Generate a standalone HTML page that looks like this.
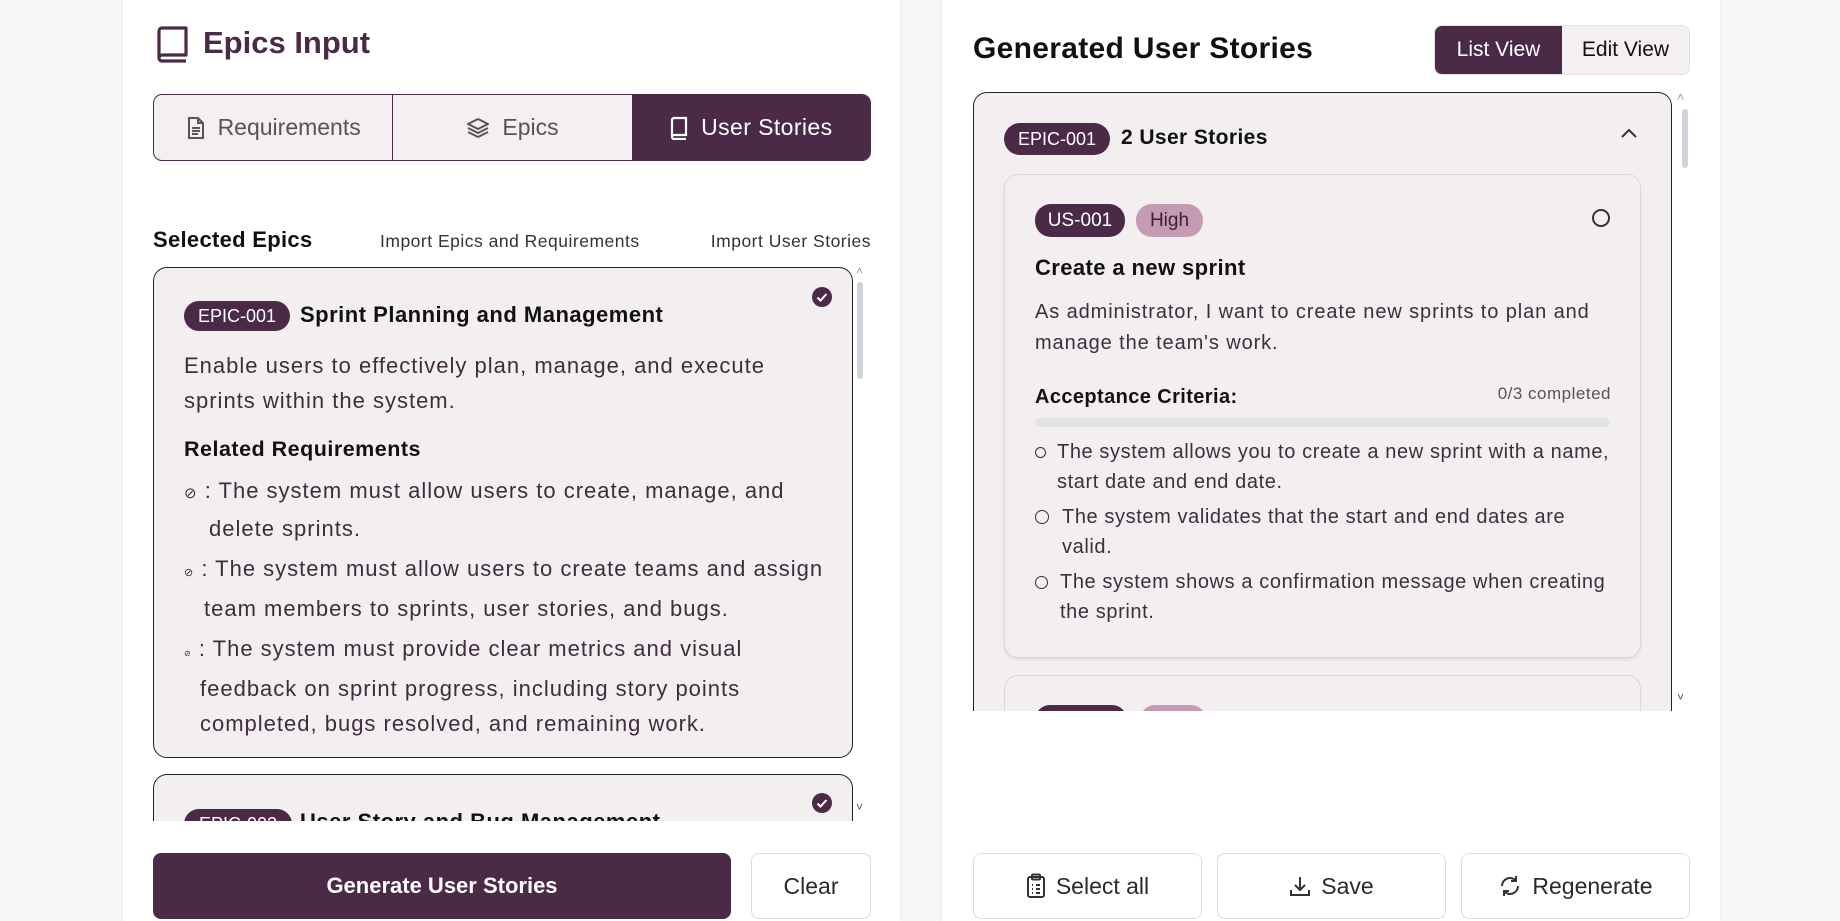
<!DOCTYPE html>
<html><head><meta charset="utf-8"><style>
*{box-sizing:border-box;margin:0;padding:0}
html{width:1840px;height:921px;overflow:hidden}
body{width:1840px;height:921px;overflow:hidden;background:#f7f7f8;font-family:"Liberation Sans",sans-serif;position:relative;color:#3f2d3d}
.abs{position:absolute}
.panel{position:absolute;top:-20px;height:941px;background:#fff;border-radius:14px 14px 0 0;box-shadow:0 0 3px rgba(0,0,0,.08)}
.plum{background:#4b2a48;color:#fff}
.badge{position:absolute;border-radius:16px;background:#4b2a48;color:#fff;font-size:18px;display:flex;align-items:center;justify-content:center}
.btn{position:absolute;border:1px solid #ddd;border-radius:8px;background:#fff;display:flex;align-items:center;justify-content:center;font-size:23px;color:#2a2a2a;gap:10px}
.t{position:absolute;white-space:nowrap}
.sp{letter-spacing:1px}
</style></head><body>
<div class="panel" style="left:123px;width:777px"></div>
<div class="panel" style="left:942px;width:778px"></div>

<!-- left -->
<svg class="abs" style="left:155px;top:25px" width="36" height="38" viewBox="0 0 36 38" fill="none" stroke="#4b2a48" stroke-width="3.2" stroke-linejoin="round"><path d="M4 33V6a3 3 0 0 1 3-3h24v27H7a3 3 0 0 0 0 6h24"/></svg>
<div class="t" style="left:203px;top:25px;font-size:31px;font-weight:bold;color:#4b2a48">Epics Input</div>

<div class="abs" style="left:153px;top:94px;width:718px;height:67px;border:1px solid #4b2a48;border-radius:9px;background:#f3eff3;overflow:hidden;display:flex">
 <div style="flex:1;display:flex;align-items:center;justify-content:center;gap:12px;font-size:23px;color:#555;border-right:1px solid #4b2a48">
  <svg width="20" height="24" viewBox="0 0 20 24" fill="none" stroke="#555" stroke-width="2"><path d="M3 2h9l5 5v15H3z"/><path d="M12 2v5h5M6 12h8M6 15h8M6 18h6"/></svg>Requirements</div>
 <div style="flex:1;display:flex;align-items:center;justify-content:center;gap:12px;font-size:23px;color:#555">
  <svg width="24" height="24" viewBox="0 0 24 24" fill="none" stroke="#555" stroke-width="2" stroke-linejoin="round"><path d="M12 3 2 8l10 5 10-5z"/><path d="M2 12l10 5 10-5M2 16l10 5 10-5"/></svg>Epics</div>
 <div class="plum" style="flex:1;display:flex;align-items:center;justify-content:center;gap:12px;font-size:23px;letter-spacing:.4px">
  <svg width="20" height="24" viewBox="0 0 20 24" fill="none" stroke="#fff" stroke-width="2.2"><path d="M3 21V4a2 2 0 0 1 2-2h12v17H5a2 2 0 0 0 0 4h12"/></svg>User Stories</div>
</div>

<div class="t" style="left:153px;top:227px;font-size:22px;font-weight:bold;color:#111;letter-spacing:.3px">Selected Epics</div>
<div class="t" style="left:380px;top:231px;font-size:17.5px;color:#333;letter-spacing:.5px">Import Epics and Requirements</div>
<div class="t" style="right:969px;top:231px;font-size:17.5px;color:#333;letter-spacing:.5px">Import User Stories</div>

<div class="abs" style="left:153px;top:267px;width:700px;height:491px;border:1.5px solid #222;border-radius:14px;background:#f3eff1"></div>
<svg class="abs" style="left:812px;top:287px" width="20" height="20" viewBox="0 0 20 20"><circle cx="10" cy="10" r="10" fill="#4b2a48"/><path d="M5.5 10.5l3 3 6-6.5" stroke="#fff" stroke-width="2" fill="none"/></svg>
<div class="badge" style="left:184px;top:301px;width:106px;height:30px">EPIC-001</div>
<div class="t" style="left:300px;top:302px;font-size:22px;font-weight:bold;color:#111;letter-spacing:.5px">Sprint Planning and Management</div>
<div class="abs sp" style="left:184px;top:348px;width:600px;font-size:22px;line-height:35px">Enable users to effectively plan, manage, and execute sprints within the system.</div>
<div class="t" style="left:184px;top:437px;font-size:21.5px;font-weight:bold;color:#111;letter-spacing:.5px">Related Requirements</div>
<div class="abs sp" style="left:184px;top:473px;width:650px;font-size:22px;line-height:35px">
 <div style="padding-left:25px;text-indent:-25px;width:630px"><span style="font-size:15px">⊘</span>&nbsp;: The system must allow users to create, manage, and delete sprints.</div>
 <div style="padding-left:20px;text-indent:-20px;margin-top:5px;width:650px"><span style="font-size:11px">⊘</span>&nbsp;: The system must allow users to create teams and assign team members to sprints, user stories, and bugs.</div>
 <div style="padding-left:16px;text-indent:-16px;margin-top:5px;width:580px"><span style="font-size:8px">⊘</span>&nbsp;: The system must provide clear metrics and visual feedback on sprint progress, including story points completed, bugs resolved, and remaining work.</div>
</div>
<div class="t" style="left:856px;top:264px;font-size:12px;color:#999">˄</div>
<div class="abs" style="left:857px;top:282px;width:6px;height:97px;background:#cfd4da;border-radius:3px"></div>
<div class="abs" style="left:153px;top:774px;width:700px;height:60px;border:1.5px solid #222;border-bottom:none;border-radius:14px 14px 0 0;background:#f3eff1;overflow:hidden">
 <div class="badge" style="left:30px;top:34px;width:108px;height:30px;font-size:18px">EPIC-002</div>
 <div class="t" style="left:146px;top:34px;font-size:22px;font-weight:bold;color:#111;letter-spacing:.5px">User Story and Bug Management</div>
</div>
<svg class="abs" style="left:812px;top:793px" width="20" height="20" viewBox="0 0 20 20"><circle cx="10" cy="10" r="10" fill="#4b2a48"/><path d="M5.5 10.5l3 3 6-6.5" stroke="#fff" stroke-width="2" fill="none"/></svg>
<div class="t" style="left:856px;top:800px;font-size:12px;color:#555">˅</div>
<div class="abs" style="left:140px;top:821px;width:715px;height:30px;background:#fff"></div>

<div class="btn" style="left:153px;top:853px;width:578px;height:66px;border:none;background:#4b2a48;color:#fff;font-weight:bold;font-size:22px">Generate User Stories</div>
<div class="btn" style="left:751px;top:853px;width:120px;height:66px">Clear</div>

<!-- right -->
<div class="t" style="left:973px;top:32px;font-size:30px;font-weight:bold;color:#111;letter-spacing:.3px">Generated User Stories</div>
<div class="abs" style="left:1434px;top:25px;width:256px;height:50px;border:1px solid #e5dfe5;border-radius:8px;background:#f3eff3;overflow:hidden;display:flex;font-size:21px">
 <div class="plum" style="width:127px;display:flex;align-items:center;justify-content:center">List View</div>
 <div style="flex:1;display:flex;align-items:center;justify-content:center;color:#111">Edit View</div>
</div>

<div class="abs" style="left:973px;top:92px;width:699px;height:640px;border:1.5px solid #222;border-radius:14px;background:#f3eff1"></div>
<div class="badge" style="left:1004px;top:123px;width:106px;height:32px;font-size:18px">EPIC-001</div>
<div class="t" style="left:1121px;top:126px;font-size:21px;font-weight:bold;color:#111;letter-spacing:.4px">2 User Stories</div>
<svg class="abs" style="left:1620px;top:127px" width="18" height="12" viewBox="0 0 18 12"><path d="M2 10l7-7 7 7" stroke="#333" stroke-width="2" fill="none"/></svg>
<div class="t" style="left:1677px;top:90px;font-size:12px;color:#999">˄</div>
<div class="abs" style="left:1682px;top:109px;width:6px;height:59px;background:#cfd4da;border-radius:3px"></div>

<div class="abs" style="left:1004px;top:174px;width:637px;height:484px;border:1.5px solid #dcd5da;border-radius:14px;background:#f3eff1;box-shadow:0 2px 3px rgba(0,0,0,.08)"></div>
<div class="badge" style="left:1035px;top:204px;width:90px;height:33px;font-size:19px">US-001</div>
<div class="badge" style="left:1136px;top:204px;width:67px;height:33px;font-size:19px;background:#c49bb3;color:#3a2038">High</div>
<div class="abs" style="left:1592px;top:209px;width:18px;height:18px;border:2px solid #333;border-radius:50%"></div>
<div class="t" style="left:1035px;top:255px;font-size:22px;font-weight:bold;color:#111;letter-spacing:.4px">Create a new sprint</div>
<div class="abs" style="left:1035px;top:297px;width:580px;font-size:20px;line-height:31px;letter-spacing:.9px">As administrator, I want to create new sprints to plan and manage the team's work.</div>
<div class="t" style="left:1035px;top:386px;font-size:20px;font-weight:bold;color:#111;letter-spacing:.4px">Acceptance Criteria:</div>
<div class="t" style="right:229px;top:384px;font-size:17px;color:#555;letter-spacing:.5px">0/3 completed</div>
<div class="abs" style="left:1035px;top:418px;width:575px;height:9px;background:#e3e3e6;border-radius:5px"></div>
<div class="abs" style="left:1035px;top:437px;width:585px;font-size:20px;line-height:30px;letter-spacing:.6px">
 <div style="padding-left:22px;position:relative"><span style="position:absolute;left:0;top:10px;width:11px;height:11px;border:1.5px solid #333;border-radius:50%"></span>The system allows you to create a new sprint with a name, start date and end date.</div>
 <div style="padding-left:27px;position:relative;margin-top:5px;width:570px"><span style="position:absolute;left:0;top:8px;width:14px;height:14px;border:1.5px solid #333;border-radius:50%"></span>The system validates that the start and end dates are valid.</div>
 <div style="padding-left:25px;position:relative;margin-top:5px"><span style="position:absolute;left:0;top:9px;width:13px;height:13px;border:1.5px solid #333;border-radius:50%"></span>The system shows a confirmation message when creating the sprint.</div>
</div>
<div class="abs" style="left:1004px;top:675px;width:637px;height:60px;border:1.5px solid #dcd5da;border-radius:14px;background:#f3eff1"></div>
<div class="badge" style="left:1035px;top:705px;width:92px;height:30px"></div>
<div class="badge" style="left:1140px;top:705px;width:66px;height:30px;background:#c49bb3"></div>
<div class="abs" style="left:960px;top:711px;width:750px;height:120px;background:#fff"></div>
<div class="t" style="left:1677px;top:690px;font-size:12px;color:#555">˅</div>

<div class="btn" style="left:973px;top:853px;width:229px;height:66px"><svg width="20" height="26" viewBox="0 0 20 26" fill="none" stroke="#333" stroke-width="2"><rect x="2" y="4" width="16" height="20" rx="2"/><rect x="6" y="1.5" width="8" height="5" rx="1"/><path d="M6 12h1M10 12h4M6 16h1M10 16h4M6 20h1M10 20h4"/></svg>Select all</div>
<div class="btn" style="left:1217px;top:853px;width:229px;height:66px"><svg width="22" height="22" viewBox="0 0 22 22" fill="none" stroke="#333" stroke-width="2"><path d="M11 2v13M6 10l5 5 5-5M2 15v5h18v-5"/></svg>Save</div>
<div class="btn" style="left:1461px;top:853px;width:229px;height:66px"><svg width="24" height="24" viewBox="0 0 24 24" fill="none" stroke="#333" stroke-width="2"><path d="M20 12a8 8 0 0 1-14 5.3M4 12a8 8 0 0 1 14-5.3"/><path d="M18 2v5h-5M6 22v-5h5"/></svg>Regenerate</div>
</body></html>
